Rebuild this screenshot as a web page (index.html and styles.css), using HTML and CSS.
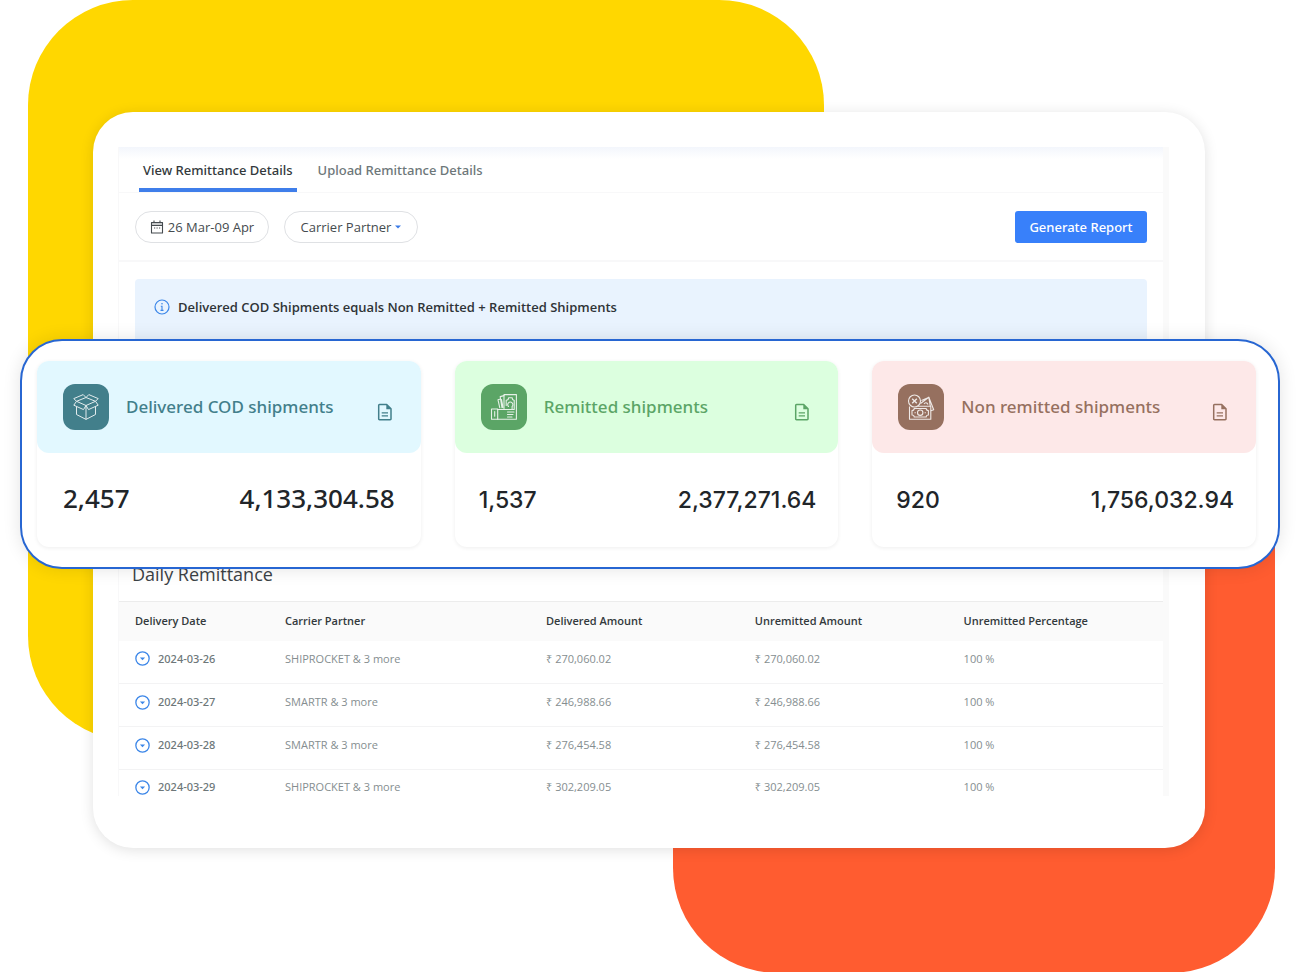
FILE: index.html
```html
<!DOCTYPE html>
<html lang="en">
<head>
<meta charset="utf-8">
<meta name="viewport" content="width=device-width, initial-scale=1">
<title>Remittance Details</title>
<link rel="stylesheet" href="styles.css">
</head>
<body>
<svg class="sprite" aria-hidden="true">
  <symbol id="doc" viewBox="0 0 16 18">
    <path d="M2.5 1.5h7.2l4.3 4.2v10.3a.8.8 0 0 1-.8.8H2.5a.8.8 0 0 1-.8-.8V2.300a.8.8 0 0 1 .8-.8z" fill="none" stroke="currentColor" stroke-width="1.500" stroke-linejoin="round"/>
    <path d="M9.300 1.500v4.700h4.700z" fill="currentColor"/>
    <path d="M4.700 9.800h6.300M4.700 12.800h6.300" stroke="currentColor" stroke-width="1.300"/>
  </symbol>
  <symbol id="expand" viewBox="0 0 14 14">
    <circle cx="7" cy="7" r="6.200" fill="none" stroke="currentColor" stroke-width="1.200"/>
    <path d="M4.600 6h4.800L7 8.600z" fill="currentColor"/>
  </symbol>
</svg>
<main class="stage">
  <div class="shape shape-yellow"></div>
  <div class="shape shape-orange"></div>

  <div class="tablet">
    <div class="panel">
      <nav class="tabs">
        <a class="tab tab-active" href="#view">View Remittance Details</a>
        <a class="tab" href="#upload">Upload Remittance Details</a>
      </nav>

      <div class="filters">
        <button class="pill" type="button">
          <svg class="calendar" viewBox="0 0 14 14" aria-hidden="true">
            <path d="M1.500 2.500h11v10.500h-11z" fill="none" stroke="currentColor" stroke-width="1.100" stroke-linejoin="round"/>
            <path d="M1.500 2.500h11v3h-11z" fill="currentColor" fill-opacity=".3"/>
            <path d="M1.500 5.500h11M4 .5v2.500M10 .5v2.500" stroke="currentColor" stroke-width="1.100"/>
            <path d="M4 8h1.200M6.500 8h1.200M9 8h1.200" stroke="currentColor" stroke-width="1.200"/>
          </svg>
          26 Mar-09 Apr
        </button>
        <button class="pill" type="button">
          Carrier Partner
          <svg class="caret" viewBox="0 0 6 4" aria-hidden="true"><path d="M0 .5h6L3 3.500z" fill="currentColor"/></svg>
        </button>
        <button class="primary" type="button">Generate Report</button>
      </div>

      <div class="notice">
        <svg class="info" viewBox="0 0 16 16" fill="none" stroke="currentColor" aria-hidden="true">
          <circle cx="8" cy="8" r="7" stroke-width="1.200"/>
          <path d="M6.800 7.200H8v4.200M6.500 11.400h3" stroke-width="1.100"/>
          <circle cx="8" cy="4.800" r=".8" fill="currentColor" stroke="none"/>
        </svg>
        <strong>Delivered COD Shipments equals Non Remitted + Remitted Shipments</strong>
      </div>

      <section class="summary" aria-label="Shipment summary">
        <article class="card card-delivered">
          <header class="card-head">
            <span class="badge">
              <svg viewBox="0 0 28 28" fill="none" stroke="currentColor" stroke-width="1" stroke-linejoin="round" aria-hidden="true">
                <path d="M14 12.500 4.500 8.300 14 4.500l9.500 3.800z"/>
                <path d="M4.500 8.300 1.800 12.200 11.500 16.600 14 12.500l2.500 4.100 9.700-4.400-2.700-3.900"/>
                <path d="M4.500 8.300 1.800 5.600 11.200 1.600 14 4.500l2.800-2.900 9.400 4-2.700 2.700"/>
                <path d="M4.500 13.500v8L14 26.400l9.500-4.900v-8M14 12.500v13.900"/>
              </svg>
            </span>
            <h2>Delivered COD shipments</h2>
            <svg class="doc"><use href="#doc"/></svg>
          </header>
          <div class="figures"><span>2,457</span><span>4,133,304.58</span></div>
        </article>

        <article class="card card-remitted">
          <header class="card-head">
            <span class="badge">
              <svg viewBox="0 0 28 28" fill="none" stroke="currentColor" stroke-width="1.100" stroke-linejoin="round" stroke-linecap="round" aria-hidden="true">
                <path d="M1.500 16h6.200v10.200H1.500zM4.700 18.500v4.700"/>
                <path d="M7.700 16.500h8.800M7.700 26.200h18.700V1.600H14v14M16.500 16.500h7.500M17.500 19h6.500M17.500 21.500h5.500M17.500 24h4.500"/>
                <path d="M16.200 12.500V7.200c1.700 0 2.400-.8 2.400-2.400h3.600c0 1.600.6 2.400 2 2.400v9"/>
                <path d="M18.500 13.500a2.600 2.600 0 1 1 3.600 0v2.500"/>
                <path d="M12 14.800 10.200 3.600l3.800-1M9.800 14.800 8 6.800l2.300-.8M11.500 6.500l1.500 8"/>
              </svg>
            </span>
            <h2>Remitted shipments</h2>
            <svg class="doc"><use href="#doc"/></svg>
          </header>
          <div class="figures figures-alt"><span>1,537</span><span>2,377,271.64</span></div>
        </article>

        <article class="card card-pending">
          <header class="card-head">
            <span class="badge">
              <svg viewBox="0 0 28 28" fill="none" stroke="currentColor" stroke-width="1.100" stroke-linejoin="round" aria-hidden="true">
                <circle cx="7.500" cy="8" r="6"/>
                <path d="M5.200 5.700l4.600 4.600M9.800 5.700l-4.600 4.600" stroke-width="1.400"/>
                <path d="M2.500 13.500v12.700h21.300V13.200H11"/>
                <path d="M7.200 15.500h12c0 1.300.8 2 2.200 2v4.500c-1.400 0-2.200.7-2.200 2h-12c0-1.300-.8-2-2.200-2v-4.500c1.400 0 2.200-.7 2.200-2z"/>
                <circle cx="13.200" cy="19.700" r="2.700"/>
                <path d="M7.500 19.700h1.300M17.600 19.700h1.300"/>
                <path d="M13.500 10.500l8.300-6.300 4.900 12.600-2.900 1M21.800 4.200l1.500 9M14.500 7.500l6.500-2.700M17 11c1-1.800 3-1.800 4 .500"/>
              </svg>
            </span>
            <h2>Non remitted shipments</h2>
            <svg class="doc"><use href="#doc"/></svg>
          </header>
          <div class="figures figures-alt"><span>920</span><span>1,756,032.94</span></div>
        </article>
      </section>

      <h2 class="section-title">Daily Remittance</h2>
      <table class="remittance">
        <colgroup><col class="col-date"><col class="col-carrier"><col class="col-amount"><col class="col-amount"><col></colgroup>
        <thead>
          <tr><th>Delivery Date</th><th>Carrier Partner</th><th>Delivered Amount</th><th>Unremitted Amount</th><th>Unremitted Percentage</th></tr>
        </thead>
        <tbody>
          <tr><td><button class="date" type="button"><svg><use href="#expand"/></svg>2024-03-26</button></td><td>SHIPROCKET &amp; 3 more</td><td>₹ 270,060.02</td><td>₹ 270,060.02</td><td>100 %</td></tr>
          <tr><td><button class="date" type="button"><svg><use href="#expand"/></svg>2024-03-27</button></td><td>SMARTR &amp; 3 more</td><td>₹ 246,988.66</td><td>₹ 246,988.66</td><td>100 %</td></tr>
          <tr><td><button class="date" type="button"><svg><use href="#expand"/></svg>2024-03-28</button></td><td>SMARTR &amp; 3 more</td><td>₹ 276,454.58</td><td>₹ 276,454.58</td><td>100 %</td></tr>
          <tr><td><button class="date" type="button"><svg><use href="#expand"/></svg>2024-03-29</button></td><td>SHIPROCKET &amp; 3 more</td><td>₹ 302,209.05</td><td>₹ 302,209.05</td><td>100 %</td></tr>
        </tbody>
      </table>
    </div>
  </div>
</main>
</body>
</html>
```
FILE: styles.css
```css
* {
  box-sizing: border-box;
}

body {
  margin: 0;
  background: #fff;
  color: #2f3437;
  font-family: "Open Sans", "Noto Sans", sans-serif;
  font-size: 13px;
}

button {
  font: inherit;
  color: inherit;
  cursor: pointer;
}

.sprite {
  display: none;
}

.stage {
  position: relative;
  min-height: 100vh;
  padding: 112px 95px 125px 93px;
}

.shape {
  position: absolute;
  border-radius: 105px;
}

.shape-yellow {
  top: 0;
  left: 28px;
  right: 476px;
  height: 741px;
  background: #ffd700;
}

.shape-orange {
  top: 400px;
  bottom: 0;
  left: 673px;
  right: 25px;
  background: #ff5c30;
}

.tablet {
  position: relative;
  padding: 35px 36px 52px 25px;
  border-radius: 40px;
  background: #fff;
  box-shadow: 0 2px 14px rgba(0, 0, 0, 0.12);
}

.panel {
  border-left: 1px solid #f8f8f9;
  border-right: 6px solid #fafafa;
  background: linear-gradient(#f3f6fc, #fff 12px);
}

/* Tabs */
.tabs {
  display: flex;
  gap: 17px;
  padding-left: 20px;
  border-bottom: 1px solid #f8f8f9;
}

.tab {
  padding: 12px 4px 0;
  height: 45px;
  border-bottom: 4px solid transparent;
  color: #6d7779;
  font-family: "Noto Sans", "Open Sans", sans-serif;
  font-weight: 500;
  line-height: 22px;
  text-decoration: none;
}

.tab-active {
  border-color: #3f7eea;
  border-radius: 3px 3px 0 0;
  color: #33393c;
}

/* Filters */
.filters {
  display: flex;
  align-items: center;
  gap: 15px;
  height: 69px;
  padding: 0 16px;
  border-bottom: 2px solid #f8f8f9;
}

.pill {
  display: flex;
  align-items: center;
  justify-content: center;
  gap: 4px;
  min-width: 134px;
  height: 32px;
  padding: 0;
  border: 1px solid #dfe1e4;
  border-radius: 16px;
  background: #fff;
  color: #454b4f;
}

.calendar {
  width: 14px;
  height: 14px;
}

.caret {
  width: 6px;
  height: 4px;
  color: #3a7be8;
}

.primary {
  width: 132px;
  height: 32px;
  margin-left: auto;
  padding: 0;
  border: 0;
  border-radius: 3px;
  background: #3880fa;
  color: #fff;
  font-family: "Noto Sans", "Open Sans", sans-serif;
  font-weight: 500;
}

/* Notice */
.notice {
  display: flex;
  align-items: flex-start;
  gap: 8px;
  height: 62px;
  margin: 17px 16px 0;
  padding: 17px 19px;
  border-radius: 4px 4px 0 0;
  background: #e9f3fe;
  line-height: 22px;
}

.notice strong {
  font-weight: 600;
}

.info {
  width: 16px;
  height: 22px;
  color: #3b86e8;
}

/* Summary */
.summary {
  position: relative;
  z-index: 1;
  display: grid;
  grid-template-columns: repeat(3, 1fr);
  gap: 34px;
  margin: -2px -117px 0 -99px;
  padding: 20px 22px 20px 15px;
  border: 2px solid #2766d2;
  border-radius: 42px;
  background: #fff;
  box-shadow: 0 0 18px rgba(0, 0, 0, 0.11);
}

.card {
  border-radius: 12px;
  background: #fff;
  box-shadow: 0 1px 4px rgba(0, 0, 0, 0.07);
}

.card-head {
  display: flex;
  align-items: center;
  height: 92px;
  padding: 0 28px 0 26px;
  border-radius: 12px;
  background: var(--tint);
  color: var(--ink);
}

.card-head h2 {
  margin: 0 0 0 17px;
  font-family: "Noto Sans", "Open Sans", sans-serif;
  font-size: 17px;
  font-weight: 500;
  line-height: 24px;
}

.card-delivered {
  --tint: #e2f8ff;
  --ink: #427f8b;
}

.card-remitted {
  --tint: #dcffdf;
  --ink: #5ba566;
}

.card-pending {
  --tint: #fde8e8;
  --ink: #96705f;
}

.badge {
  display: grid;
  place-items: center;
  width: 46px;
  height: 46px;
  border-radius: 12px;
  background: var(--ink);
  color: #fff;
}

.badge svg {
  width: 28px;
  height: 28px;
  opacity: 0.85;
}

.doc {
  width: 16px;
  height: 18px;
  margin: 10px 0 0 auto;
}

.figures {
  display: flex;
  align-items: center;
  justify-content: space-between;
  height: 94px;
  padding: 0 26px 4px;
  color: #212529;
  font-family: "Noto Sans", "Open Sans", sans-serif;
  font-size: 26px;
  font-weight: 500;
}

.figures-alt {
  padding: 0 22px 0 24px;
  font-family: Inter, sans-serif;
  font-size: 23px;
}

/* Table */
.section-title {
  margin: -8px 0 0;
  padding: 0 13px 14px;
  color: #3c4246;
  font-size: 18px;
  font-weight: 400;
  line-height: 26px;
}

.remittance {
  width: 100%;
  border-collapse: collapse;
  table-layout: fixed;
  font-size: 11px;
  line-height: 16px;
  text-align: left;
}

.col-date {
  width: 150px;
}

.col-carrier {
  width: 25%;
}

.col-amount {
  width: 20%;
}

.remittance th,
.remittance td {
  padding: 0 0 0 16px;
}

.remittance th {
  height: 39px;
  border-top: 1px solid #ececec;
  background: #fafafa;
  color: #33393c;
  font-weight: 600;
}

.remittance td {
  height: 43px;
  padding-bottom: 6px;
  color: #858e90;
}

.remittance tbody tr + tr {
  border-top: 1px solid #f3f3f4;
}

.remittance tbody tr:last-child td {
  height: 26px;
  padding-top: 9px;
  padding-bottom: 0;
}

.date {
  display: flex;
  align-items: center;
  gap: 8px;
  padding: 0;
  border: 0;
  background: none;
  color: #6d7779;
  font-family: "Noto Sans", "Open Sans", sans-serif;
  font-weight: 500;
}

.date svg {
  width: 15px;
  height: 15px;
  color: #3b86e8;
}
```
